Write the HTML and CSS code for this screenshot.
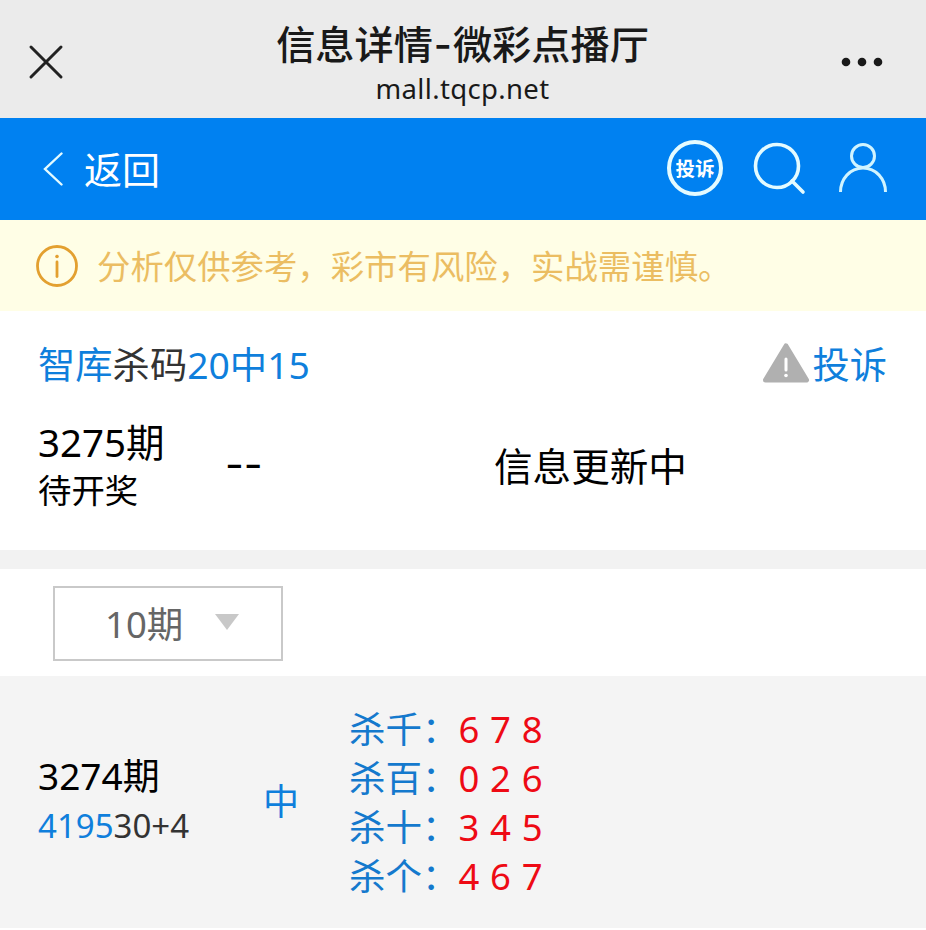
FILE: index.html
```html
<!DOCTYPE html>
<html lang="zh-CN">
  <head>
    <meta charset="utf-8" />
    <meta name="viewport" content="width=device-width, initial-scale=1" />
    <title>信息详情-微彩点播厅</title>
    <link rel="stylesheet" href="styles.css">
  </head>

  <body>
    <div class="topbar">
      <svg class="close" viewBox="0 0 36 36">
        <path d="M3 3l30 30M33 3l-30 30" />
      </svg>
      <div class="topbar-title">
        <h1>信息详情<span class="dash">-</span>微彩点播厅</h1>
        <p>mall.tqcp.net</p>
      </div>
      <svg class="more" viewBox="0 0 42 10">
        <circle cx="5" cy="5" r="4.3" />
        <circle cx="21" cy="5" r="4.3" />
        <circle cx="37" cy="5" r="4.3" />
      </svg>
    </div>

    <div class="nav">
      <a class="back">
        <svg viewBox="0 0 20 34"><path d="M18.5 1.5L2 17l16.5 15.5" /></svg>
        <span>返回</span>
      </a>
      <div class="nav-icons">
        <span class="badge">投诉</span>
        <svg class="search" viewBox="0 0 54 54">
          <circle cx="25" cy="25" r="21.5" />
          <path d="M40 40l11 11" />
        </svg>
        <svg class="user" viewBox="0 0 50 50">
          <circle cx="25" cy="13" r="11.5" />
          <path d="M2.5 49c0-13 9.5-24 22.5-24s22.5 11 22.5 24" />
        </svg>
      </div>
    </div>

    <div class="notice">
      <svg viewBox="0 0 44 44">
        <circle class="ring" cx="22" cy="22" r="19.5" />
        <circle class="dot" cx="22" cy="12.5" r="1.8" />
        <path d="M22 18v14.5" />
      </svg>
      <span>分析仅供参考，彩市有风险，实战需谨慎。</span>
    </div>

    <div class="card">
      <div class="card-head">
        <div><span class="blue">智库</span>杀码<span class="blue">20中15</span></div>
        <a class="report">
          <svg viewBox="0 0 48 40">
            <path class="tri" d="M24 3L44.5 37H3.5z" />
            <path class="mark" d="M24 16v11" />
            <circle cx="24" cy="32.5" r="1.8" />
          </svg>
          <span>投诉</span>
        </a>
      </div>
      <div class="current">
        <div class="issue">
          <p class="issue-no">3275期</p>
          <p class="issue-state">待开奖</p>
        </div>
        <div class="result">--</div>
        <div class="info">信息更新中</div>
      </div>
    </div>

    <div class="filter">
      <div class="select">
        <span>10期</span>
        <i class="arrow"></i>
      </div>
    </div>

    <div class="history">
      <div class="issue">
        <p class="issue-no">3274期</p>
        <p class="numbers"><span class="blue">4195</span>30+4</p>
      </div>
      <div class="hit">中</div>
      <ul class="kills">
        <li><span>杀千：</span><b>6 7 8</b></li>
        <li><span>杀百：</span><b>0 2 6</b></li>
        <li><span>杀十：</span><b>3 4 5</b></li>
        <li><span>杀个：</span><b>4 6 7</b></li>
      </ul>
    </div>
  </body>
</html>
```

FILE: styles.css
```css
* {
  box-sizing: border-box;
}

body {
  margin: 0;
  background-color: #fff;
  color: #000;
  font-family: "Noto Sans", "Noto Sans CJK SC", sans-serif;
}

h1, p, ul {
  margin: 0;
  padding: 0;
}

svg {
  display: block;
  fill: none;
  stroke-linecap: round;
}

.blue {
  color: #0f7fdc;
}

/* browser bar */
.topbar {
  display: flex;
  align-items: center;
  justify-content: space-between;
  height: 118px;
  padding: 6px 43px 0 28px;
  background-color: #ebebeb;
  color: #191919;
}

.close {
  width: 36px;
  height: 36px;
  stroke: #222;
  stroke-width: 3;
}

.more {
  width: 42px;
  height: 10px;
  fill: #191919;
}

.topbar-title {
  padding-left: 20px;
  text-align: center;
}

.topbar-title h1 {
  font-size: 39.2px;
  font-weight: 500;
  line-height: 52px;
}

.topbar-title p {
  font-size: 27.5px;
  letter-spacing: 0.35px;
  line-height: 36px;
}

.dash {
  display: inline-block;
  width: 20px;
  font-family: Inter, sans-serif;
}

/* site nav */
.nav {
  display: flex;
  align-items: center;
  justify-content: space-between;
  height: 102px;
  padding: 0 38px 0 43px;
  background-color: #0081f1;
  color: #fff;
}

.back {
  display: flex;
  align-items: center;
  gap: 21px;
  font-size: 38px;
}

.back span {
  padding-bottom: 3px;
}

.back svg {
  width: 20px;
  height: 34px;
  stroke: #e4fbff;
  stroke-width: 2.4;
}

.nav-icons {
  display: flex;
  align-items: center;
  padding-bottom: 2px;
}

.badge {
  width: 56px;
  height: 56px;
  border: 4px solid #e4fbff;
  border-radius: 50%;
  font-size: 19.5px;
  font-weight: 700;
  line-height: 49px;
  text-align: center;
  white-space: nowrap;
}

.search {
  width: 54px;
  height: 54px;
  margin-left: 29px;
  stroke: #e4fbff;
  stroke-width: 3.6;
}

.user {
  width: 50px;
  height: 50px;
  margin-left: 32px;
  stroke: #d0f4ff;
  stroke-width: 3;
  stroke-linecap: butt;
}

/* notice */
.notice {
  display: flex;
  align-items: center;
  gap: 18px;
  height: 91px;
  padding-left: 35px;
  background-color: #fffee6;
  color: #ebbd62;
  font-size: 33.4px;
}

.notice span {
  padding-bottom: 2px;
}

.notice svg {
  width: 44px;
  height: 44px;
  stroke: #e3a030;
  stroke-width: 2.8;
}

.notice .dot {
  fill: #e3a030;
  stroke: none;
}

/* current issue */
.card {
  height: 239px;
  padding: 24px 39px 0 38px;
}

.card-head {
  display: flex;
  align-items: center;
  justify-content: space-between;
  height: 56px;
  color: #333;
  font-size: 37.3px;
}

.report {
  display: flex;
  align-items: center;
  gap: 2px;
  color: #0f7fdc;
}

.report svg {
  width: 48px;
  height: 40px;
  fill: #fff;
}

.report .tri {
  fill: #b0b0b0;
  stroke: #b0b0b0;
  stroke-width: 5;
  stroke-linejoin: round;
}

.report .mark {
  stroke: #fff;
  stroke-width: 3;
}

.current {
  display: grid;
  grid-template-columns: 187px 269px 1fr;
  align-items: center;
  margin-top: 25px;
}

.issue-no {
  font-size: 38.5px;
  line-height: 52px;
}

.issue-state {
  font-size: 33.4px;
  line-height: 44px;
}

.result {
  font-family: Inter, sans-serif;
  font-size: 41px;
}

.info {
  font-size: 38.6px;
}

/* period filter */
.filter {
  height: 126px;
  padding: 17px 53px;
  border-top: 19px solid #f2f2f2;
}

.select {
  display: flex;
  align-items: center;
  gap: 32px;
  width: 230px;
  height: 75px;
  padding: 0 0 3px 50px;
  border: 2px solid #c9c9c9;
  color: #666;
  font-size: 36.5px;
}

.arrow {
  border: 12px solid transparent;
  border-top: 16px solid #c8c8c8;
  border-bottom: 0;
}

/* history rows */
.history {
  display: grid;
  grid-template-columns: 225px 86px 1fr;
  align-items: center;
  height: 252px;
  padding-left: 38px;
  background-color: #f4f4f4;
}

.history .issue {
  padding-bottom: 4px;
}

.history .issue-no {
  font-size: 37px;
}

.numbers {
  color: #333;
  font-size: 33px;
  line-height: 48px;
}

.hit {
  padding-bottom: 5px;
  color: #0f7fdc;
  font-size: 36px;
}

.kills {
  padding-top: 2px;
  list-style: none;
  font-size: 36.5px;
  line-height: 48.8px;
}

.kills li {
  display: flex;
}

.kills span {
  color: #1479cd;
}

.kills b {
  color: #ee0a14;
  font-weight: 400;
  word-spacing: 1.2px;
}
```
